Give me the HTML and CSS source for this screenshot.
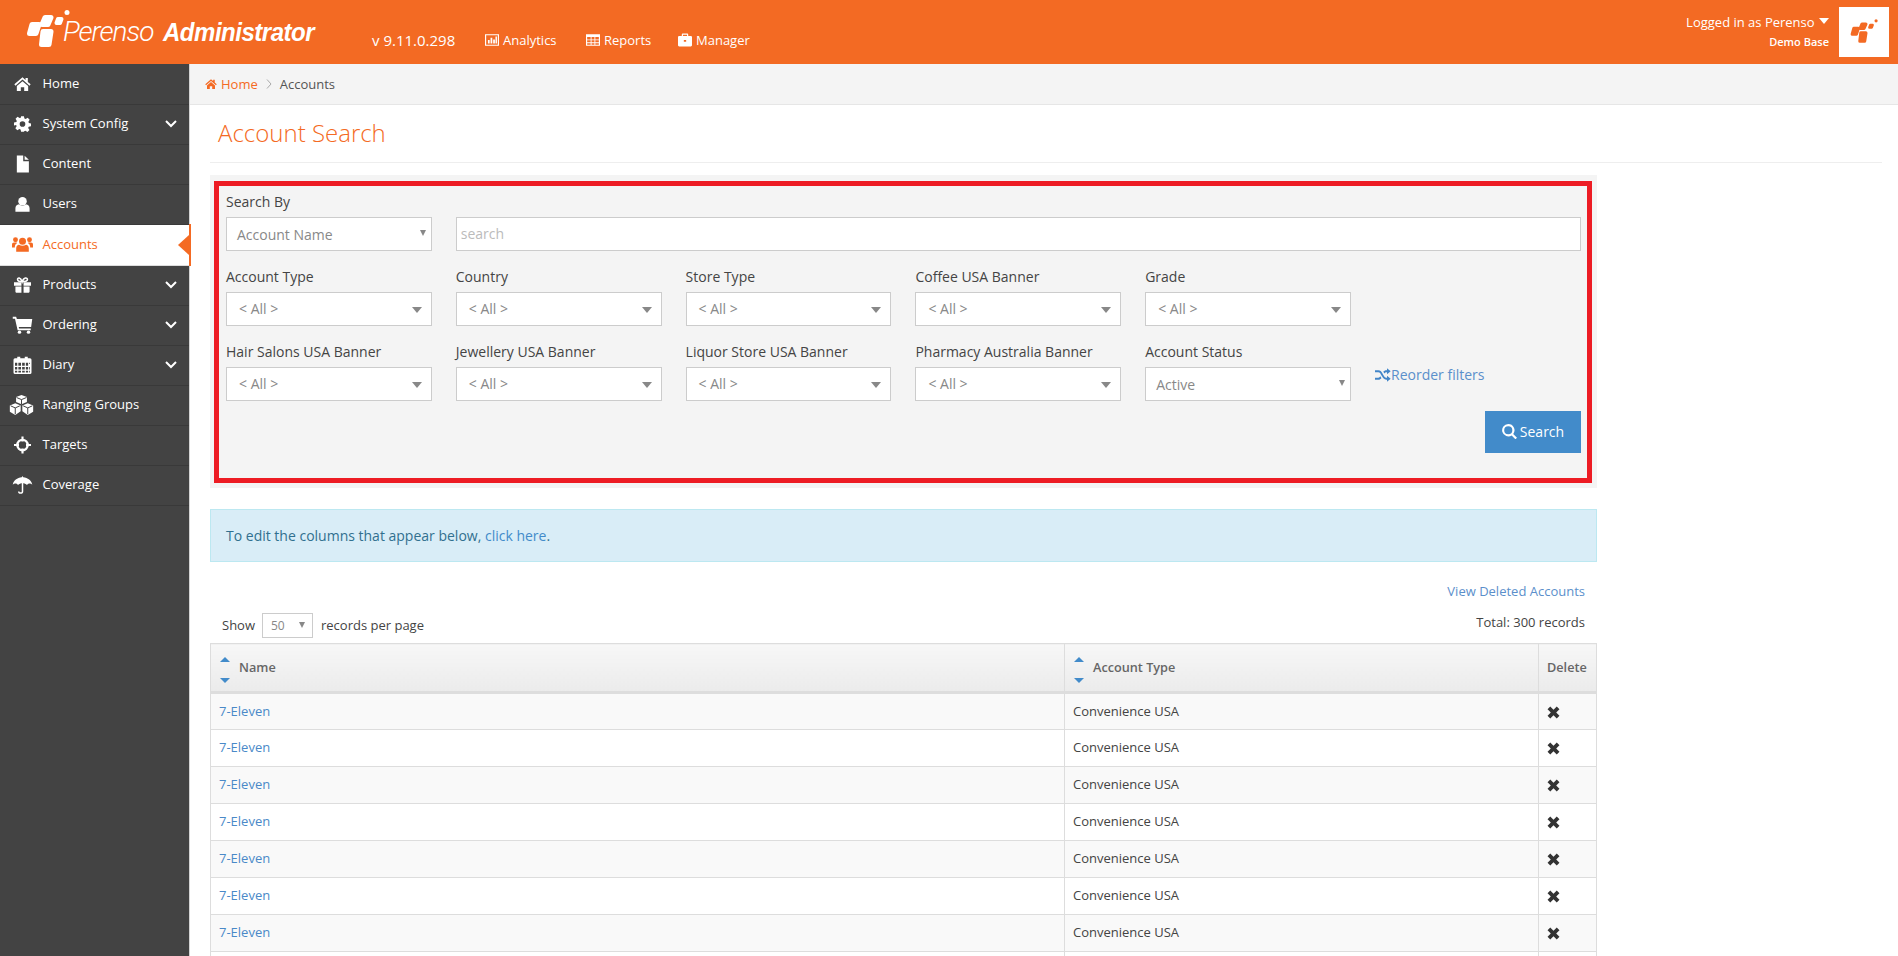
FILE: index.html
```html
<!DOCTYPE html>
<html lang="en">
<head>
<meta charset="utf-8">
<title>Account Search</title>
<link rel="stylesheet" href="styles.css">
</head>
<body>
<svg class="defs" width="0" height="0">
  <defs>
    <symbol id="mark" viewBox="0 0 44 37">
      <g stroke-linejoin="round" stroke-width="5">
        <polygon points="6,14.500 13,14.500 10,23.500 3.500,23.500"/>
        <polygon points="19,7.500 25,7.500 22,14.500 16,14.500"/>
        <polygon points="32,9 35.500,9 34,13 30.500,13" stroke-width="4"/>
        <polygon points="17,21.500 25,21.500 23,34.500 15.500,34.500"/>
      </g>
      <circle cx="41" cy="2.500" r="2.500" stroke="none"/>
    </symbol>
    <symbol id="i-home" viewBox="0 0 24 24"><path d="M12 2.500 0.500 12.500l1.600 1.800L12 5.800l9.900 8.500 1.600-1.800L19.500 9V3.500h-3.200v2.700z"/><path d="M12 8 4 14.800V22h5.600v-5.500h4.800V22H20v-7.200z"/></symbol>
    <symbol id="i-cog" viewBox="0 0 24 24"><path fill-rule="evenodd" d="M10 1h4l.7 3.300 1.700.7 2.900-1.800 2.800 2.800-1.800 2.900.7 1.700 3 .7v4l-3.300.7-.7 1.700 1.800 2.900-2.800 2.800-2.900-1.800-1.700.7L14 23h-4l-.7-3.300-1.700-.7-2.900 1.800-2.800-2.800 1.800-2.900-.7-1.700L0 14v-4l3.300-.7.700-1.700-1.800-2.900L5 1.900l2.900 1.800 1.700-.7zM12 8a4 4 0 1 0 0 8 4 4 0 0 0 0-8z"/></symbol>
    <symbol id="i-file" viewBox="0 0 24 24"><path d="M4 0h9v8h8v16H4z"/><path d="M15 0.500 21 6h-6z"/></symbol>
    <symbol id="i-user" viewBox="0 0 24 24"><circle cx="12" cy="8" r="6"/><path d="M2 23v-5c0-3 2-5 5-5.500 3 2.500 7 2.500 10 0 3 .5 5 2.500 5 5.500v5z"/></symbol>
    <symbol id="i-users" viewBox="0 0 30 24"><circle cx="5" cy="6" r="3.500"/><circle cx="25" cy="6" r="3.500"/><circle cx="15" cy="8" r="5"/><path d="M0 17v-4c0-2 1-3 3-3h4v1c-2 1-3 3-3 6zM30 17v-4c0-2-1-3-3-3h-4v1c2 1 3 3 3 6z"/><path d="M6 23v-5c0-3 2-5 4-5 3 2 7 2 10 0 2 0 4 2 4 5v5z"/></symbol>
    <symbol id="i-gift" viewBox="0 0 24 24"><path d="M0 8h10.500v5H0zM13.500 8H24v5H13.500zM2 14h8.500v9H4c-1 0-2-1-2-2zM13.500 14H22v7c0 1-1 2-2 2h-6.500z"/><path fill="none" stroke="currentColor" stroke-width="2.200" d="M11.500 7.500C8 7.500 5 6.500 5 4s4-3.500 6.500 3.500C14 .5 19 1.500 19 4s-4 3.500-7.500 3.500z"/></symbol>
    <symbol id="i-cart" viewBox="0 0 26 24"><path d="M0 1h4.500l1 3H26l-1.500 10.500H8l.5 2H24v2.500H6.500L3 3.500H0z"/><circle cx="9" cy="21.500" r="2.300"/><circle cx="21" cy="21.500" r="2.300"/></symbol>
    <symbol id="i-cal" viewBox="0 0 24 24"><path fill-rule="evenodd" d="M2 3h3V1h4v2h6V1h4v2h3a2 2 0 0 1 2 2v17a2 2 0 0 1-2 2H2a2 2 0 0 1-2-2V5a2 2 0 0 1 2-2zM2 9v4h3V9zm4.500 0v4H10V9zm5 0v4H15V9zm5 0v4H19.500V9zM21 9v1.500h1V9zM2 14.500V18h3v-3.500zm4.500 0V18H10v-3.500zm5 0V18H15v-3.500zm5 0V18H19.500v-3.500zM21 14.500V18h1v-3.500zM2 19.500V22h3v-2.500zm4.500 0V22H10v-2.500zm5 0V22H15v-2.500zm5 0V22H19.500v-2.500zM21 19.500V22h1v-2.500z"/></symbol>
    <symbol id="i-cubes" viewBox="0 0 30 24"><path d="M15 0l6.500 2.500v6L15 11l-6.500-2.500v-6zM7.500 10l6.500 2.500v7L7.500 24 1 20v-7.500zM22.500 10l6.500 2.500V20l-6.500 4-6.500-4.500v-7z"/><path fill="none" stroke="#434343" stroke-width="1.200" d="M9 3l6 2.500L21 3M15 5.500V11M2 13l5.500 2.500L13 13M7.500 15.500V23M17 13l5.500 2.500L28 13M22.500 15.500V23"/></symbol>
    <symbol id="i-cross" viewBox="0 0 24 24"><path fill-rule="evenodd" d="M12 3a9 9 0 1 1 0 18 9 9 0 0 1 0-18zm0 3.500a5.500 5.500 0 1 0 0 11 5.500 5.500 0 0 0 0-11z"/><path d="M10.500 0h3v7h-3zM10.500 17h3v7h-3zM0 10.500h7v3H0zM17 10.500h7v3h-7z"/></symbol>
    <symbol id="i-umb" viewBox="0 0 26 24"><path d="M13 0l1 1.800c6 .5 11 4.500 12 9.700-2-2-5-2-7 .5-1.500-2-3.500-2.500-6-2.500s-4.500.5-6 2.500c-2-2.500-5-2.500-7-.5 1-5.200 6-9.200 12-9.700z"/><path fill="none" stroke="currentColor" stroke-width="2" d="M13 9v11.500c0 3-5 3-5 0"/></symbol>
    <symbol id="i-chart" viewBox="0 0 24 24"><path fill-rule="evenodd" d="M0 2h24v20H0zM2 4v16h20V4z"/><path d="M5 12h3v6H5zM9.500 8h3v10h-3zM14 11h3v7h-3zM18 6h2.500v12H18z"/></symbol>
    <symbol id="i-table" viewBox="0 0 24 24"><path fill-rule="evenodd" d="M0 2h24v20H0zM2 7v4h6V7zm7.500 0v4h5V7zm6.500 0v4h6V7zM2 12.500v3.500h6v-3.500zm7.500 0v3.500h5v-3.500zm6.500 0v3.500h6v-3.500zM2 17.500V20h6v-2.500zm7.500 0V20h5v-2.500zm6.500 0V20h6v-2.500z"/></symbol>
    <symbol id="i-case" viewBox="0 0 24 24"><path fill-rule="evenodd" d="M8 1h8a1.500 1.500 0 0 1 1.500 1.500V5H22a2 2 0 0 1 2 2v14a2 2 0 0 1-2 2H2a2 2 0 0 1-2-2V7a2 2 0 0 1 2-2h4.500V2.500A1.500 1.500 0 0 1 8 1zm.500 2v2h7V3zM10 12v3h4v-3z"/></symbol>
    <symbol id="i-shuffle" viewBox="0 0 24 20"><path d="M0 3h5c3 0 4.500 2 6 4.500l1.500 2.500c1.300 2.300 2.500 4 4.500 4h1v-3l5.500 4.500L18 20v-3h-1c-3.500 0-5-2.500-6.500-5L9 9.500C7.800 7.300 6.700 6 5 6H0zM0 14h5c1.300 0 2.200-.7 3-2l1.700 2.700C8.500 16 7 17 5 17H0zM12.500 5.200C13.800 3.800 15.200 3 17 3h1V0l5.500 4.500L18 9V6h-1c-1 0-1.800.5-2.800 1.800z"/></symbol>
    <symbol id="i-search" viewBox="0 0 24 24"><path fill-rule="evenodd" d="M10 0a10 10 0 0 1 8 16l6 6-2.500 2.500-6-6A10 10 0 1 1 10 0zm0 3.500a6.500 6.500 0 1 0 0 13 6.500 6.500 0 0 0 0-13z"/></symbol>
    <symbol id="i-x" viewBox="0 0 24 24"><path d="M6 1l6 6 6-6 5 5-6 6 6 6-5 5-6-6-6 6-5-5 6-6-6-6z"/></symbol>
    <symbol id="i-chev" viewBox="0 0 12 8"><path fill="none" stroke="currentColor" stroke-width="2" d="M1 1l5 5 5-5"/></symbol>
    <symbol id="i-crumb" viewBox="0 0 6 10"><path fill="none" stroke="currentColor" stroke-width="1" d="M1 .5 5 5 1 9.500"/></symbol>
  </defs>
</svg>

<header class="topbar">
  <div class="brand">
    <svg class="brand-mark"><use href="#mark"/></svg>
    <div class="brand-text"><span class="brand-thin">Perenso</span><span class="brand-bold">Administrator</span></div>
  </div>
  <span class="version">v 9.11.0.298</span>
  <nav class="topnav">
    <a class="topnav-link"><svg class="topnav-icon"><use href="#i-chart"/></svg>Analytics</a>
    <a class="topnav-link"><svg class="topnav-icon"><use href="#i-table"/></svg>Reports</a>
    <a class="topnav-link"><svg class="topnav-icon"><use href="#i-case"/></svg>Manager</a>
  </nav>
  <div class="account">
    <div class="account-name">Logged in as Perenso <span class="caret"></span></div>
    <div class="account-base">Demo Base</div>
  </div>
  <div class="account-logo"><svg class="account-mark"><use href="#mark"/></svg></div>
</header>

<div class="shell">
  <aside class="sidebar">
    <a class="side-item"><svg class="side-icon"><use href="#i-home"/></svg>Home</a>
    <a class="side-item"><svg class="side-icon"><use href="#i-cog"/></svg>System Config<svg class="side-chev"><use href="#i-chev"/></svg></a>
    <a class="side-item"><svg class="side-icon"><use href="#i-file"/></svg>Content</a>
    <a class="side-item"><svg class="side-icon"><use href="#i-user"/></svg>Users</a>
    <a class="side-item side-active"><svg class="side-icon side-icon-wide"><use href="#i-users"/></svg>Accounts</a>
    <a class="side-item"><svg class="side-icon"><use href="#i-gift"/></svg>Products<svg class="side-chev"><use href="#i-chev"/></svg></a>
    <a class="side-item"><svg class="side-icon side-icon-wide"><use href="#i-cart"/></svg>Ordering<svg class="side-chev"><use href="#i-chev"/></svg></a>
    <a class="side-item"><svg class="side-icon side-icon-wide"><use href="#i-cal"/></svg>Diary<svg class="side-chev"><use href="#i-chev"/></svg></a>
    <a class="side-item"><svg class="side-icon side-icon-wider"><use href="#i-cubes"/></svg>Ranging Groups</a>
    <a class="side-item"><svg class="side-icon"><use href="#i-cross"/></svg>Targets</a>
    <a class="side-item"><svg class="side-icon side-icon-wide"><use href="#i-umb"/></svg>Coverage</a>
  </aside>

  <main class="main">
    <div class="crumbs">
      <svg class="crumb-home"><use href="#i-home"/></svg><a class="crumb-link">Home</a>
      <svg class="crumb-sep"><use href="#i-crumb"/></svg><span class="crumb-current">Accounts</span>
    </div>

    <div class="content">
      <h1 class="page-title">Account Search</h1>

      <section class="panel">
        <div class="highlight">
          <div class="filters">
            <div class="field">
              <label class="field-label field-label-first">Search By</label>
              <div class="select select-native">Account Name</div>
            </div>
            <div class="field field-wide">
              <input class="search-input" type="text" placeholder="search">
            </div>
            <div class="field"><label class="field-label">Account Type</label><div class="select select-chosen">&lt; All &gt;</div></div>
            <div class="field"><label class="field-label">Country</label><div class="select select-chosen">&lt; All &gt;</div></div>
            <div class="field"><label class="field-label">Store Type</label><div class="select select-chosen">&lt; All &gt;</div></div>
            <div class="field"><label class="field-label">Coffee USA Banner</label><div class="select select-chosen">&lt; All &gt;</div></div>
            <div class="field"><label class="field-label">Grade</label><div class="select select-chosen">&lt; All &gt;</div></div>
            <div class="field-spacer"></div>
            <div class="field"><label class="field-label">Hair Salons USA Banner</label><div class="select select-chosen">&lt; All &gt;</div></div>
            <div class="field"><label class="field-label">Jewellery USA Banner</label><div class="select select-chosen">&lt; All &gt;</div></div>
            <div class="field"><label class="field-label">Liquor Store USA Banner</label><div class="select select-chosen">&lt; All &gt;</div></div>
            <div class="field"><label class="field-label">Pharmacy Australia Banner</label><div class="select select-chosen">&lt; All &gt;</div></div>
            <div class="field"><label class="field-label">Account Status</label><div class="select select-native">Active</div></div>
            <a class="reorder"><svg class="reorder-icon"><use href="#i-shuffle"/></svg>Reorder filters</a>
          </div>
          <div class="actions">
            <button class="search-btn" type="button"><svg class="search-icon"><use href="#i-search"/></svg>Search</button>
          </div>
        </div>
      </section>

      <div class="notice">To edit the columns that appear below, <a class="notice-link">click here</a>.</div>

      <div class="deleted-row"><a class="deleted-link">View Deleted Accounts</a></div>
      <div class="pager-row">
        <div class="pager">Show <div class="select-mini">50</div> records per page</div>
        <div class="total">Total: 300 records</div>
      </div>

      <table class="grid">
        <thead>
          <tr>
            <th class="col-name"><span class="sorter"><span class="sort-up"></span><span class="sort-down"></span></span>Name</th>
            <th class="col-type"><span class="sorter"><span class="sort-up"></span><span class="sort-down"></span></span>Account Type</th>
            <th class="col-del">Delete</th>
          </tr>
        </thead>
        <tbody>
          <tr><td><a class="row-link">7-Eleven</a></td><td>Convenience USA</td><td class="cell-del"><svg class="del-icon"><use href="#i-x"/></svg></td></tr>
          <tr><td><a class="row-link">7-Eleven</a></td><td>Convenience USA</td><td class="cell-del"><svg class="del-icon"><use href="#i-x"/></svg></td></tr>
          <tr><td><a class="row-link">7-Eleven</a></td><td>Convenience USA</td><td class="cell-del"><svg class="del-icon"><use href="#i-x"/></svg></td></tr>
          <tr><td><a class="row-link">7-Eleven</a></td><td>Convenience USA</td><td class="cell-del"><svg class="del-icon"><use href="#i-x"/></svg></td></tr>
          <tr><td><a class="row-link">7-Eleven</a></td><td>Convenience USA</td><td class="cell-del"><svg class="del-icon"><use href="#i-x"/></svg></td></tr>
          <tr><td><a class="row-link">7-Eleven</a></td><td>Convenience USA</td><td class="cell-del"><svg class="del-icon"><use href="#i-x"/></svg></td></tr>
          <tr><td><a class="row-link">7-Eleven</a></td><td>Convenience USA</td><td class="cell-del"><svg class="del-icon"><use href="#i-x"/></svg></td></tr>
          <tr><td></td><td></td><td></td></tr>
        </tbody>
      </table>
    </div>
  </main>
</div>
</body>
</html>
```

FILE: styles.css
```css
* { box-sizing: border-box; }
html, body { height: 100%; }
body {
  margin: 0;
  height: 956px;
  overflow: hidden;
  display: flex;
  flex-direction: column;
  background: #fff;
  color: #444;
  font-family: "Open Sans", "Liberation Sans", sans-serif;
  font-size: 13px;
}
.defs { position: absolute; }
a { text-decoration: none; }

/* Top bar */
.topbar {
  flex: 0 0 64px;
  display: flex;
  align-items: center;
  background: #f36a23;
  color: #fff;
}
.brand { display: flex; align-items: flex-start; width: 372px; padding: 10px 0 0 26px; height: 64px; }
.brand-mark { flex: none; width: 44px; height: 37px; fill: #fff; stroke: #fff; }
.brand-text { display: flex; align-items: baseline; margin: 7px 0 0 -7px; line-height: 30px; white-space: nowrap; }
.brand-thin { width: 100px; font-family: "Roboto", sans-serif; font-style: italic; font-weight: 300; font-size: 28px; letter-spacing: -1px; }
.brand-bold { font-family: "Liberation Sans", sans-serif; font-weight: 700; font-style: italic; font-size: 25px; letter-spacing: -0.5px; display: inline-block; transform: scaleX(0.96); transform-origin: left center; }
.version { font-size: 15px; margin-top: 16px; width: 113px; }
.topnav { display: flex; margin-top: 16px; }
.topnav-link { display: flex; align-items: center; color: #fff; font-size: 13px; }
.topnav-link:nth-child(1) { width: 101px; }
.topnav-link:nth-child(2) { width: 92px; }
.topnav-icon { width: 14px; height: 14px; margin-right: 4px; fill: #fff; }
.account { margin-left: auto; text-align: right; padding: 0 10px 2px 0; }
.account-name { font-size: 13px; line-height: 18px; }
.caret { display: inline-block; border: 5px solid transparent; border-top: 6px solid #fff; border-bottom: 0; margin-left: 1px; vertical-align: 3px; width: 0; height: 0; }
.account-base { font-size: 11px; font-weight: 600; line-height: 16px; margin-top: 3px; }
.account-logo { width: 50px; height: 50px; background: #fff; margin-right: 9px; display: flex; align-items: center; justify-content: center; }
.account-mark { width: 28px; height: 24px; margin-bottom: 3px; fill: #f36a23; stroke: #f36a23; }

/* Shell */
.shell { flex: 1; display: flex; min-height: 0; }
.sidebar { flex: 0 0 190px; padding-top: 1px; background: #434343; border-right: 1px solid #d4d4d4; }
.side-item {
  position: relative;
  display: flex;
  align-items: center;
  height: 40px;
  padding: 0 0 4px 42.500px;
  color: #fff;
  font-size: 13px;
  border-bottom: 1px solid #393939;
}
.side-icon { position: absolute; left: 14px; top: 10px; width: 17px; height: 18px; fill: #fff; color: #fff; }
.side-icon-wide { left: 12px; width: 21px; }
.side-icon-wider { left: 9px; top: 9px; width: 25px; height: 20px; }
.side-chev { position: absolute; right: 12px; top: 15px; width: 12px; height: 8px; color: #fff; }
.side-active { height: 41px; padding-bottom: 3px; background: #fff; color: #f46a23; border-bottom-color: #ddd; }
.side-active .side-icon { fill: #f46a23; color: #f46a23; }
.side-active::after {
  content: "";
  position: absolute;
  right: -2px;
  top: -1px;
  bottom: -1px;
  width: 2px;
  background: #f46a23;
}
.side-active::before {
  content: "";
  position: absolute;
  right: 0;
  top: 10px;
  border: 10px solid transparent;
  border-left: 0;
  border-right: 11px solid #f46a23;
}

/* Main */
.main { flex: 1; min-width: 0; display: flex; flex-direction: column; overflow: hidden; }
.crumbs {
  flex: 0 0 41px;
  display: flex;
  align-items: center;
  padding-left: 15px;
  background: #f4f4f4;
  border-bottom: 1px solid #e6e6e6;
  font-size: 13px;
}
.crumb-home { width: 12px; height: 12px; fill: #f46a23; margin-right: 4px; }
.crumb-link { color: #f46a23; }
.crumb-sep { width: 6px; height: 10px; color: #aaa; margin: 0 8px 0 8px; }
.crumb-current { color: #555; }

.content { padding: 0 16px 0 20px; }
.page-title {
  margin: 0 0 12px;
  height: 58px;
  padding: 12px 0 0 8px;
  font-size: 24px;
  line-height: 32px;
  font-weight: 300;
  color: #f46a23;
  border-bottom: 1px solid #eee;
}
.panel { width: 1387px; height: 313px; background: #f4f4f4; padding: 6px 5px 5px 4px; }
.highlight { height: 302px; border: 5px solid #ed1c24; padding: 6px 6px 0 7px; }
.filters { display: grid; grid-template-columns: repeat(5, 205.8px) 1fr; column-gap: 24px; row-gap: 16px; }
.field-wide { grid-column: 2 / 7; align-self: end; }
.field-label { display: block; height: 20px; line-height: 20px; margin-bottom: 5px; font-size: 14px; color: #444; }
.select {
  position: relative;
  height: 34px;
  background: #fff;
  border: 1px solid #ccc;
  color: #888;
  font-size: 14px;
  line-height: 32px;
}
.select::after { content: ""; position: absolute; width: 0; height: 0; border-style: solid; border-color: #888 transparent transparent; }
.select-chosen { padding-left: 12px; }
.select-chosen::after { right: 9px; top: 14px; border-width: 6px 5px 0; }
.select-native { padding-left: 10px; line-height: 33px; }
.select-native::after { right: 5px; top: 12px; border-width: 6px 3px 0; }
.search-input {
  display: block;
  width: 100%;
  height: 34px;
  padding: 0 4px 2px;
  background: #fff;
  border: 1px solid #ccc;
  border-radius: 0;
  font: 14px "Open Sans", sans-serif;
  outline: 0;
}
.search-input::placeholder { color: #bbb; opacity: 1; }
.reorder { align-self: start; margin-top: 23px; display: flex; align-items: center; color: #5b8fcb; font-size: 14px; line-height: 20px; }
.reorder-icon { width: 16px; height: 14px; fill: #4285c8; }
.actions { display: flex; justify-content: flex-end; margin-top: 10px; }
.search-btn {
  display: flex;
  align-items: center;
  justify-content: center;
  width: 96px;
  height: 42px;
  padding-bottom: 2px;
  border: 0;
  background: #428bca;
  color: #fff;
  font: 14px "Open Sans", sans-serif;
}
.search-icon { width: 15px; height: 15px; fill: #fff; margin-right: 3px; }

.notice {
  width: 1387px;
  height: 53px;
  margin-top: 21px;
  padding-left: 15px;
  background: #d9edf7;
  border: 1px solid #bce8f1;
  color: #31708f;
  font-size: 14px;
  line-height: 51px;
}
.notice-link { color: #428bca; }

.deleted-row { width: 1387px; margin-top: 19px; padding-right: 12px; text-align: right; line-height: 20px; }
.deleted-link { color: #5b8fcb; font-size: 13px; }
.pager-row { width: 1387px; height: 31px; margin-top: 11px; display: flex; justify-content: space-between; padding: 0 12px; }
.pager { display: flex; align-items: center; height: 26px; font-size: 13px; color: #444; }
.select-mini {
  position: relative;
  width: 51px;
  height: 25px;
  margin: 0 8px 0 7px;
  padding-left: 8px;
  border: 1px solid #ccc;
  background: #fff;
  color: #888;
  font-size: 12px;
  line-height: 24px;
}
.select-mini::after { content: ""; position: absolute; right: 7px; top: 8px; width: 0; height: 0; border-style: solid; border-width: 6px 3px 0; border-color: #888 transparent transparent; }
.total { font-size: 13px; line-height: 20px; color: #444; }

.grid { width: 1386px; table-layout: fixed; border-collapse: collapse; font-size: 13px; color: #444; }
.grid th {
  position: relative;
  height: 49px;
  padding: 0 0 2px 28px;
  text-align: left;
  font-size: 12.700px;
  font-weight: 600;
  color: #666;
  background: linear-gradient(#f7f7f7, #ebebeb);
  border: 1px solid #ddd;
  border-bottom: 3px solid #ddd;
}
.grid .col-name { width: 854px; }
.grid .col-type { width: 474px; }
.grid .col-del { width: 58px; padding-left: 8px; }
.grid td { height: 37px; padding: 0 0 2px 8px; border: 1px solid #ddd; }
.grid tbody tr:nth-child(odd) td { background: #f9f9f9; }
.row-link { color: #4a89c8; }
.sorter { position: absolute; left: 9px; top: 13px; width: 11px; height: 26px; }
.sort-up, .sort-down { position: absolute; left: 0; width: 0; height: 0; border: 5.500px solid transparent; }
.sort-up { top: 0; border-top: 0; border-bottom: 5px solid #428bca; }
.sort-down { bottom: 0; border-bottom: 0; border-top: 5px solid #428bca; }
.del-icon { display: block; width: 13px; height: 13px; margin-top: 3px; fill: #333; }
```
